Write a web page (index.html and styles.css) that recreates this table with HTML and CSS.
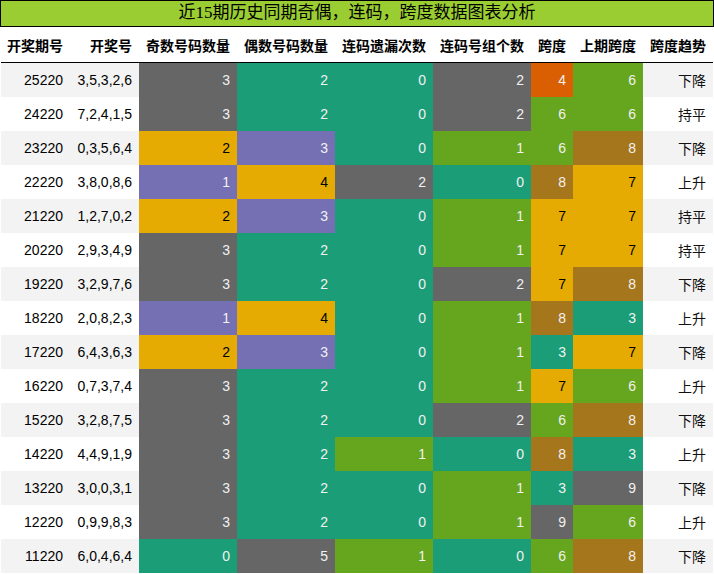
FILE: index.html
```html
<!DOCTYPE html>
<html lang="zh">
<head>
<meta charset="utf-8">
<title>近15期历史同期奇偶，连码，跨度数据图表分析</title>
<link rel="stylesheet" href="styles.css">
</head>
<body>
<div class="title">近15期历史同期奇偶，连码，跨度数据图表分析</div>
<table class="grid">
  <colgroup>
    <col class="w69"><col class="w69"><col class="w98"><col class="w98"><col class="w98"><col class="w98"><col class="w42"><col class="w70"><col class="w70">
  </colgroup>
  <thead>
    <tr><th>开奖期号</th><th>开奖号</th><th>奇数号码数量</th><th>偶数号码数量</th><th>连码遗漏次数</th><th>连码号组个数</th><th>跨度</th><th>上期跨度</th><th>跨度趋势</th></tr>
  </thead>
  <tbody>
    <tr><td>25220</td><td>3,5,3,2,6</td><td class="gray">3</td><td class="teal">2</td><td class="teal">0</td><td class="gray">2</td><td class="orange">4</td><td class="green">6</td><td class="cn">下降</td></tr>
    <tr><td>24220</td><td>7,2,4,1,5</td><td class="gray">3</td><td class="teal">2</td><td class="teal">0</td><td class="gray">2</td><td class="green">6</td><td class="green">6</td><td class="cn">持平</td></tr>
    <tr><td>23220</td><td>0,3,5,6,4</td><td class="yellow">2</td><td class="purple">3</td><td class="teal">0</td><td class="green">1</td><td class="green">6</td><td class="brown">8</td><td class="cn">下降</td></tr>
    <tr><td>22220</td><td>3,8,0,8,6</td><td class="purple">1</td><td class="yellow">4</td><td class="gray">2</td><td class="teal">0</td><td class="brown">8</td><td class="yellow">7</td><td class="cn">上升</td></tr>
    <tr><td>21220</td><td>1,2,7,0,2</td><td class="yellow">2</td><td class="purple">3</td><td class="teal">0</td><td class="green">1</td><td class="yellow">7</td><td class="yellow">7</td><td class="cn">持平</td></tr>
    <tr><td>20220</td><td>2,9,3,4,9</td><td class="gray">3</td><td class="teal">2</td><td class="teal">0</td><td class="green">1</td><td class="yellow">7</td><td class="yellow">7</td><td class="cn">持平</td></tr>
    <tr><td>19220</td><td>3,2,9,7,6</td><td class="gray">3</td><td class="teal">2</td><td class="teal">0</td><td class="gray">2</td><td class="yellow">7</td><td class="brown">8</td><td class="cn">下降</td></tr>
    <tr><td>18220</td><td>2,0,8,2,3</td><td class="purple">1</td><td class="yellow">4</td><td class="teal">0</td><td class="green">1</td><td class="brown">8</td><td class="teal">3</td><td class="cn">上升</td></tr>
    <tr><td>17220</td><td>6,4,3,6,3</td><td class="yellow">2</td><td class="purple">3</td><td class="teal">0</td><td class="green">1</td><td class="teal">3</td><td class="yellow">7</td><td class="cn">下降</td></tr>
    <tr><td>16220</td><td>0,7,3,7,4</td><td class="gray">3</td><td class="teal">2</td><td class="teal">0</td><td class="green">1</td><td class="yellow">7</td><td class="green">6</td><td class="cn">上升</td></tr>
    <tr><td>15220</td><td>3,2,8,7,5</td><td class="gray">3</td><td class="teal">2</td><td class="teal">0</td><td class="gray">2</td><td class="green">6</td><td class="brown">8</td><td class="cn">下降</td></tr>
    <tr><td>14220</td><td>4,4,9,1,9</td><td class="gray">3</td><td class="teal">2</td><td class="green">1</td><td class="teal">0</td><td class="brown">8</td><td class="teal">3</td><td class="cn">上升</td></tr>
    <tr><td>13220</td><td>3,0,0,3,1</td><td class="gray">3</td><td class="teal">2</td><td class="teal">0</td><td class="green">1</td><td class="teal">3</td><td class="gray">9</td><td class="cn">下降</td></tr>
    <tr><td>12220</td><td>0,9,9,8,3</td><td class="gray">3</td><td class="teal">2</td><td class="teal">0</td><td class="green">1</td><td class="gray">9</td><td class="green">6</td><td class="cn">上升</td></tr>
    <tr><td>11220</td><td>6,0,4,6,4</td><td class="teal">0</td><td class="gray">5</td><td class="green">1</td><td class="teal">0</td><td class="green">6</td><td class="brown">8</td><td class="cn">下降</td></tr>
  </tbody>
</table>
</body>
</html>
```
FILE: styles.css
```css
html, body {
  margin: 0;
  padding: 0;
  background: #ffffff;
}
body {
  width: 714px;
  font-family: "Liberation Sans", "Noto Sans CJK SC", sans-serif;
  color: #000;
}
.title {
  box-sizing: border-box;
  height: 27px;
  border: 1px solid #000;
  background: #9acd32;
  text-align: center;
  font-family: "Liberation Serif", "Noto Sans CJK SC", serif;
  font-size: 17px;
  line-height: 24px;
  color: #000;
}
.grid {
  margin-left: 1px;
  width: 712px;
  border-collapse: collapse;
  border-spacing: 0;
  table-layout: fixed;
  font-size: 14px;
}
.w69 { width: 69px; }
.w98 { width: 98px; }
.w42 { width: 42px; }
.w70 { width: 70px; }
.grid th {
  height: 35px;
  padding: 0 7px 0 0;
  text-align: right;
  font-weight: bold;
  font-family: "Noto Sans CJK SC", sans-serif;
  font-size: 14px;
  border-bottom: 1px solid #000;
  white-space: nowrap;
  vertical-align: middle;
}
.grid td {
  height: 34px;
  padding: 0 7px 0 0;
  text-align: right;
  vertical-align: middle;
  white-space: nowrap;
  color: #000;
}
.grid tbody tr:nth-child(odd) { background: #f3f3f3; }
.grid tbody tr:nth-child(even) { background: #ffffff; }
.grid td.cn {
  font-family: "Noto Sans CJK SC", sans-serif;
  color: #111;
}
.grid td.gray { background: #666666; color: #f1f1f1; }
.grid td.teal { background: #1b9e77; color: #f1f1f1; }
.grid td.orange { background: #d95f02; color: #f1f1f1; }
.grid td.green { background: #66a61e; color: #f1f1f1; }
.grid td.yellow { background: #e6ab02; color: #000; }
.grid td.purple { background: #7570b3; color: #f1f1f1; }
.grid td.brown { background: #a6761d; color: #f1f1f1; }
```
